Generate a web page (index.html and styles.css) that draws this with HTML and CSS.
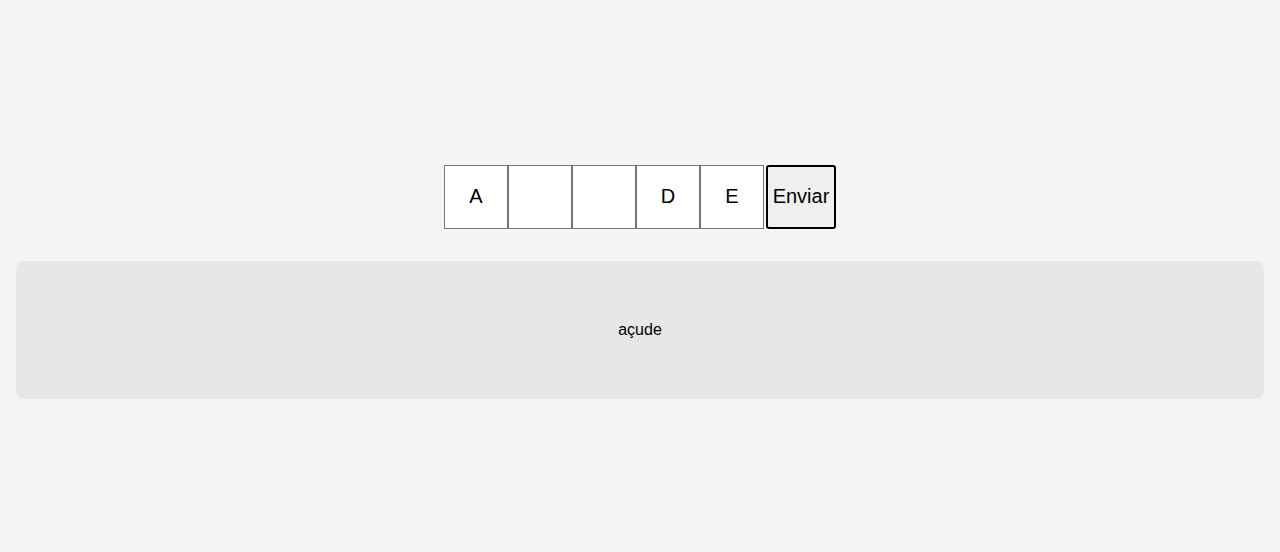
FILE: index.html
```html
<!DOCTYPE html>
<html lang="pt">
<head>
<meta charset="utf-8">
<title>Jogo</title>
<link rel="stylesheet" href="styles.css">
</head>
<body>
<main class="page">
  <form class="guess-row">
    <input class="cell" type="text" maxlength="1" value="A">
    <input class="cell" type="text" maxlength="1" value="">
    <input class="cell" type="text" maxlength="1" value="">
    <input class="cell" type="text" maxlength="1" value="D">
    <input class="cell" type="text" maxlength="1" value="E">
    <button class="send" type="button">Enviar</button>
  </form>
  <section class="result">açude</section>
</main>
</body>
</html>
```

FILE: styles.css
```css
html, body {
  margin: 0;
  padding: 0;
  background: #f5f5f5;
  font-family: "Liberation Sans", Arial, sans-serif;
}
.page {
  padding: 165px 16px 16px;
}
.guess-row {
  display: flex;
  justify-content: center;
  margin: 0 0 32px;
}
.cell {
  box-sizing: border-box;
  width: 64px;
  height: 64px;
  margin: 0;
  padding: 0 0 2px;
  border: 1px solid #767676;
  background: #fff;
  text-align: center;
  font-family: "Liberation Sans", Arial, sans-serif;
  font-size: 20px;
  color: #000;
  outline: none;
}
.send {
  box-sizing: border-box;
  width: 70px;
  height: 64px;
  margin: 0 0 0 2px;
  padding: 0 0 2px;
  border: 2px solid #000;
  border-radius: 3px;
  background: #efefef;
  font-family: "Liberation Sans", Arial, sans-serif;
  font-size: 20px;
  color: #000;
}
.result {
  background: #e7e7e7;
  border-radius: 8px;
  height: 138px;
  display: flex;
  align-items: center;
  justify-content: center;
  font-size: 16px;
  color: #000;
}
```
